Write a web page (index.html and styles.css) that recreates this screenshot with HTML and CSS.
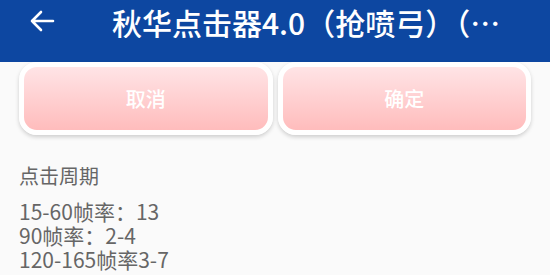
FILE: index.html
```html
<!DOCTYPE html>
<html lang="zh-CN">
<head>
  <meta charset="UTF-8" />
  <meta name="viewport" content="width=device-width, initial-scale=1.0"/>
  <title>秋华点击器4.0</title>
  <link rel="stylesheet" href="styles.css">
</head>
<body>
  <header class="topbar">
    <button class="back" type="button" aria-label="返回">
      <svg width="26" height="22" viewBox="0 0 26 22">
        <path d="M24 11H3M12 2L3 11l9 9" fill="none" stroke="#fff" stroke-width="2.6" stroke-linecap="round" stroke-linejoin="round"/>
      </svg>
    </button>
    <h1 class="title">秋华点击器4.0（抢喷弓）（免费版本）</h1>
  </header>

  <div class="actions">
    <button class="act" type="button">取消</button>
    <button class="act" type="button">确定</button>
  </div>

  <div class="info">
    <p class="label">点击周期</p>
    <div class="lines">
      <p>15-60帧率：13</p>
      <p>90帧率：2-4</p>
      <p>120-165帧率3-7</p>
    </div>
  </div>
</body>
</html>
```

FILE: styles.css
```css
body {
  margin: 0;
  background: #fafafa;
  font-family: "Noto Sans CJK SC", "Noto Sans", sans-serif;
  width: 550px;
  height: 275px;
  overflow: hidden;
}

.topbar {
  height: 62px;
  background: #0d47a1;
  display: flex;
  align-items: flex-start;
  padding-top: 6px;
  box-sizing: border-box;
}

.back {
  background: none;
  border: 0;
  padding: 0;
  margin: 4px 0 0 29px;
  width: 26px;
  height: 22px;
  display: flex;
}

.title {
  margin: 0 0 0 57px;
  color: #fff;
  font-size: 30px;
  font-weight: 500;
  line-height: 32px;
  white-space: nowrap;
  overflow: hidden;
  text-overflow: ellipsis;
  width: 416px;
}

.actions {
  display: flex;
  gap: 5px;
  padding: 0 19px;
}

.act {
  flex: 1;
  height: 73px;
  border: 5px solid #fff;
  border-radius: 18px;
  background: linear-gradient(#ffe4e6, #ffbcbc);
  box-shadow: 0 2px 4px rgba(0, 0, 0, 0.18);
  color: #fff;
  font-family: inherit;
  font-size: 20px;
  font-weight: 500;
  padding: 0;
}

.info {
  padding: 28px 19px 0;
  color: #666;
}

.label {
  margin: 0;
  font-size: 20px;
  line-height: 26px;
}

.lines {
  margin-top: 10px;
  font-size: 21px;
}

.lines p {
  margin: 0;
  height: 24px;
  line-height: 24px;
}
```
